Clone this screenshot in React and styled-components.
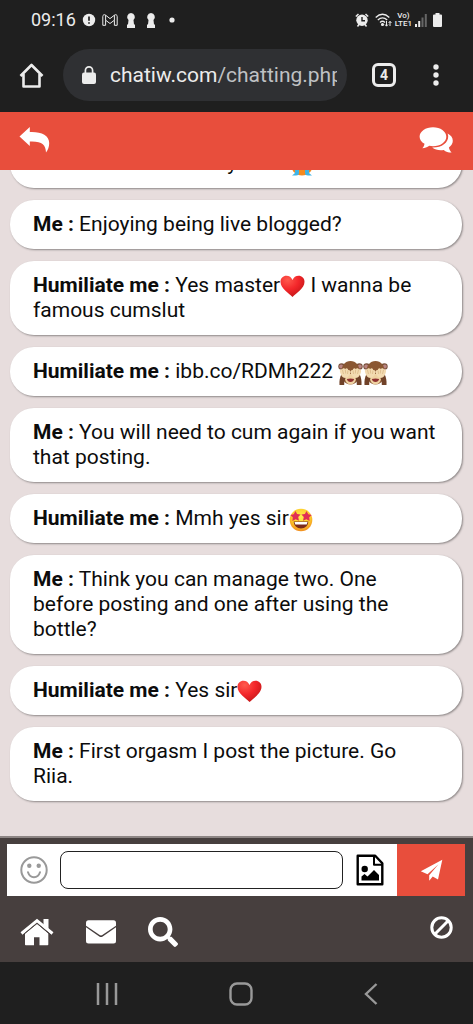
import React from "react";
import styled, { createGlobalStyle } from "styled-components";
import { FaSearch } from "react-icons/fa";

const GlobalStyle = createGlobalStyle`
  * { box-sizing: border-box; }
  body { margin: 0; background: #1f1f1f; font-family: Roboto, "Noto Sans", sans-serif; }
  button { border: 0; padding: 0; background: none; color: inherit; font: inherit; display: flex; align-items: center; justify-content: center; }
  svg { display: block; flex: none; }
`;

const Screen = styled.div`
  height: 100vh;
  display: flex;
  flex-direction: column;
`;

const StatusBar = styled.div`
  display: flex;
  align-items: center;
  justify-content: space-between;
  height: 40px;
  padding: 0 31px;
  color: #ececec;
`;

const StatusGroup = styled.div`
  display: flex;
  align-items: center;
  gap: ${(p) => p.$gap}px;
`;

const Clock = styled.time`
  font-size: 18px;
  line-height: 20px;
`;

const Lte = styled.span`
  display: flex;
  flex-direction: column;
  align-items: center;
  font-size: 8px;
  line-height: 8px;
  font-weight: 500;
`;

const BrowserBar = styled.div`
  display: flex;
  align-items: center;
  height: 72px;
  padding: 0 34px 2px 19px;
  color: #ececec;
`;

const AddressPill = styled.div`
  display: flex;
  align-items: center;
  flex: 1;
  min-width: 0;
  height: 52px;
  margin: 0 25px 0 19px;
  padding: 0 10px 0 19px;
  border-radius: 26px;
  background: #2f3033;
`;

const Address = styled.span`
  flex: 1;
  min-width: 0;
  margin-left: 14px;
  overflow: hidden;
  white-space: nowrap;
  font-size: 21px;
  line-height: 28px;
  color: #bfc1c4;
  b { font-weight: 400; color: #ececec; }
`;

const TabCount = styled.button`
  && { border: 3px solid #ececec; font-size: 14px; font-weight: 700; }
  width: 24px;
  height: 24px;
  border-radius: 6px;
  margin-right: 37px;
`;

const ChatHeader = styled.header`
  display: flex;
  align-items: center;
  justify-content: space-between;
  height: 58px;
  padding: 0 19px 2px;
  background: #e84e3c;
  color: #fff;
`;

const Messages = styled.main`
  flex: 1;
  min-height: 0;
  overflow: hidden;
  display: flex;
  flex-direction: column;
  justify-content: flex-end;
  gap: 12px;
  padding: 0 11px 35px 10px;
  background: #e7dddd;
`;

const Bubble = styled.p`
  flex: none;
  margin: 0;
  padding: 12px 23px;
  border-radius: 24px;
  background: #fff;
  box-shadow: 1px 1px 2px #8e8888;
  color: #0c0c0c;
  font-size: 21px;
  line-height: 25px;
  svg { display: inline-block; vertical-align: -5px; margin: -2px 0; }
`;

const Footer = styled.footer`
  padding: 6px 8px 0 7px;
  border-top: 2px solid #8d8584;
  background: #473f3e;
  color: #fff;
`;

const Composer = styled.form`
  display: flex;
  align-items: center;
  height: 52px;
  background: #fff;
`;

const SmileButton = styled.button`
  width: 53px;
  && { color: #999; }
`;

const MessageInput = styled.input`
  flex: 1;
  min-width: 0;
  height: 38px;
  padding: 0 10px;
  border: 1px solid #222;
  border-radius: 8px;
  background: #fff;
  font: 21px Roboto, sans-serif;
`;

const ImageButton = styled.button`
  width: 54px;
  && { color: #000; }
`;

const SendButton = styled.button`
  width: 68px;
  height: 52px;
  && { background: #e84e3c; }
`;

const Tools = styled.nav`
  display: flex;
  align-items: center;
  gap: 32px;
  height: 66px;
  padding: 5px 12px 0 13px;
`;

const BlockButton = styled.button`
  margin: 0 0 8px auto;
`;

const SystemNav = styled.nav`
  display: flex;
  align-items: center;
  justify-content: space-around;
  height: 62px;
  padding: 2px 40px 0;
  background: #1f1f1f;
  color: #999;
`;

const Heart = () => (
  <svg width="25" height="25" viewBox="0 0 25 25" aria-label="red heart">
    <defs>
      <radialGradient id="heart" cx=".3" cy=".2" r=".9">
        <stop offset="0" stopColor="#ff5a4d" /><stop offset=".5" stopColor="#f3262a" /><stop offset="1" stopColor="#bd1515" />
      </radialGradient>
    </defs>
    <path d="M12.500 23C9 19.500 .5 14.500.5 7.800.5 4 3.200 1.700 6.400 1.700c2.800 0 5 1.600 6.100 4.200 1.100-2.600 3.300-4.200 6.100-4.200 3.200 0 5.900 2.300 5.900 6.100 0 6.700-8.500 11.700-12 15.200z" fill="url(#heart)" />
  </svg>
);

const Monkey = () => (
  <svg width="25" height="25" viewBox="0 0 25 25" aria-label="see-no-evil monkey">
    <circle cx="3.600" cy="6.500" r="3.300" fill="#79503b" /><circle cx="21.400" cy="6.500" r="3.300" fill="#79503b" />
    <circle cx="3.200" cy="6.500" r="2" fill="#b98482" /><circle cx="21.800" cy="6.500" r="2" fill="#b98482" />
    <path d="M3.500 12C3.500 5 7 1 12.500 1s9 4 9 11c0 7-3 12.500-9 12.500S3.500 19 3.500 12z" fill="#8a5732" />
    <path d="M7 14h11c1 5-1 10.500-5.500 10.500S6 19 7 14z" fill="#efd2a2" />
    <path d="M8.800 19q3.700-1.200 7.400 0-.8 3-3.700 3t-3.700-3z" fill="#8e3030" />
    <path d="M1.500 25c-.3-4 .3-8 2-11l4.500 3.500c-1.500 2-1.800 4.500-1.800 7.500zM23.500 25c.3-4-.3-8-2-11L17 17.500c1.500 2 1.800 4.500 1.800 7.500z" fill="#704229" />
    <path d="M2 12c-.5-2 .5-3 2-2.500C4.500 8 6.500 7.600 7.200 9 8.500 7.600 10 8.500 10.200 10c1.600-.3 2.400.7 2.200 2.300-.3 3-2.700 5.700-5.200 5.700S2.700 15 2 12zM23 12c.5-2-.5-3-2-2.500C20.500 8 18.500 7.600 17.800 9c-1.300-1.400-2.800-.5-3 1-1.600-.3-2.400.7-2.200 2.300.3 3 2.700 5.700 5.200 5.700s4.500-3 5.200-6z" fill="#f3dbb2" />
    <path d="M4.500 10l1 4M7.300 9.500l.4 4M10 10.500l-.5 3.500M20.500 10l-1 4M17.700 9.500l-.4 4M15 10.500l.5 3.500" stroke="#d2ac79" strokeWidth=".6" fill="none" />
  </svg>
);

const StarEyes = () => (
  <svg width="24" height="24" viewBox="0 0 24 24" aria-label="star-struck face">
    <defs>
      <radialGradient id="face" cx=".5" cy=".35" r=".7">
        <stop offset="0" stopColor="#fff04d" /><stop offset=".6" stopColor="#fdc929" /><stop offset="1" stopColor="#ee7f1d" />
      </radialGradient>
    </defs>
    <circle cx="12" cy="12" r="11.300" fill="url(#face)" />
    <path d="M4.700 13.500h14.600c0 4-3.200 7-7.300 7s-7.300-3-7.300-7z" fill="#7b2a1b" />
    <path d="M5.500 14h13l-.8 2.500H6.300z" fill="#fff" />
    <path d="M6.500 3l1.600 3.100 3.500.3-2.400 2.700.8 3.600-3.400-1.500-3.200 1.800.4-3.700L1.200 7l3.500-.7z" fill="#e02f55" />
    <path d="M17.500 3l-1.600 3.100-3.500.3 2.400 2.700-.8 3.600 3.400-1.500 3.200 1.800-.4-3.700L22.800 7l-3.500-.7z" fill="#e02f55" />
  </svg>
);

const CryingFace = () => (
  <svg width="24" height="24" viewBox="0 0 24 24" aria-label="crying face">
    <circle cx="12" cy="11.500" r="11" fill="#f58a1f" />
    <path d="M5 10h4v10q0 2.500-3 2.500H2q1-1 3-2.500zM15 10h4v10q2 1.500 3 2.500h-4q-3 0-3-2.500z" fill="#3fb4e6" />
  </svg>
);

const Keyhole = () => (
  <svg width="14" height="15" viewBox="-2 0 14 15">
    <path d="M5 0a4 4 0 0 1 2.500 7L8 11.500h1V15H1v-3.500h1L2.500 7A4 4 0 0 1 5 0z" fill="currentColor" />
  </svg>
);

const messages = [
  { from: "Humiliate me", body: <>So shy there<CryingFace /></> },
  { from: "Me", body: "Enjoying being live blogged?" },
  { from: "Humiliate me", body: <>Yes master<Heart /> I wanna be famous cumslut</> },
  { from: "Humiliate me", body: <>ibb.co/RDMh222 <Monkey /><Monkey /></> },
  { from: "Me", body: "You will need to cum again if you want that posting." },
  { from: "Humiliate me", body: <>Mmh yes sir<StarEyes /></> },
  { from: "Me", body: "Think you can manage two. One before posting and one after using the bottle?" },
  { from: "Humiliate me", body: <>Yes sir<Heart /></> },
  { from: "Me", body: "First orgasm I post the picture. Go Riia." },
];

export default function App() {
  return (
    <Screen>
      <GlobalStyle />
      <StatusBar>
        <StatusGroup $gap={6}>
          <Clock>09:16</Clock>
          <svg width="14" height="14" viewBox="0 0 14 14">
            <circle cx="7" cy="7" r="6.200" fill="currentColor" />
            <path d="M7 3.500v4.300M7 9.200v1.500" stroke="#1f1f1f" strokeWidth="1.700" />
          </svg>
          <svg width="16" height="12" viewBox="0 0 16 12" fill="none" stroke="currentColor" strokeWidth="1" strokeLinejoin="round">
            <path d="M.8 11.300V2.500C.8.700 2.400.2 3.600 1.200L8 4.600l4.400-3.400c1.200-1 2.800-.5 2.800 1.300v8.800h-2.800V6.200L8 9.500 3.600 6.200v5.100zM3.600 1.200v5M12.400 1.200v5" />
          </svg>
          <Keyhole />
          <Keyhole />
          <svg width="16" height="6" viewBox="0 0 16 6"><circle cx="8" cy="3" r="2.600" fill="currentColor" /></svg>
        </StatusGroup>
        <StatusGroup $gap={3}>
          <svg width="17" height="14" viewBox="0 0 17 14">
            <circle cx="7" cy="7.300" r="5.700" fill="currentColor" />
            <path d="M.8 3.500L3.500 1M13.200 3.500L10.500 1M2.500 13.500l1.500-2M11.500 13.500l-1.500-2" stroke="currentColor" strokeWidth="1.500" />
            <path d="M7 4v3.700h3" stroke="#1f1f1f" strokeWidth="1.400" fill="none" />
          </svg>
          <svg width="17" height="14" viewBox="0 0 17 14" fill="none" stroke="currentColor" strokeWidth="1.300">
            <path d="M.7 4.500q6.800-6.500 13.600 0M2.800 7q4.700-4.300 9.400 0M5 9.400q2.500-2.200 5 0" />
            <circle cx="7.500" cy="11.500" r=".9" fill="currentColor" />
            <path d="M11.500 8v5M10 11.500l1.500 1.700 1.500-1.700M15 13V8.500M13.600 10L15 8.300l1.400 1.700" strokeWidth="1" />
          </svg>
          <Lte><span>Vo)</span><span>LTE1</span></Lte>
          <svg width="15" height="13" viewBox="0 0 15 13">
            <path d="M0 10h2v3H0zM3.200 7h2v6h-2z" fill="currentColor" />
            <path d="M6.500 3.500h2V13h-2zM9.800 0h2v13h-2z" fill="#666" />
          </svg>
          <svg width="9" height="14" viewBox="0 0 9 14"><path d="M2.500 0h4v1.500H8q1 0 1 1V13q0 1-1 1H1q-1 0-1-1V2.500q0-1 1-1h1.500z" fill="currentColor" /></svg>
        </StatusGroup>
      </StatusBar>

      <BrowserBar>
        <button aria-label="Home page">
          <svg width="25" height="25" viewBox="0 0 25 25" fill="none" stroke="currentColor" strokeWidth="2.600" strokeLinejoin="round">
            <path d="M1.500 13L12.500 2l11 11M4.500 11v12.500h16V11" />
          </svg>
        </button>
        <AddressPill>
          <svg width="14" height="18" viewBox="0 0 14 18">
            <rect x="0" y="6.500" width="14" height="11.500" rx="2" fill="currentColor" />
            <path d="M3.400 7V4.500a3.600 3.600 0 0 1 7.200 0V7" stroke="currentColor" strokeWidth="1.700" fill="none" />
          </svg>
          <Address><b>chatiw.com</b>/chatting.php</Address>
        </AddressPill>
        <TabCount>4</TabCount>
        <button aria-label="Menu">
          <svg width="6" height="22" viewBox="0 0 6 22" fill="currentColor">
            <circle cx="3" cy="3" r="2.700" /><circle cx="3" cy="11" r="2.700" /><circle cx="3" cy="19" r="2.700" />
          </svg>
        </button>
      </BrowserBar>

      <ChatHeader>
        <button aria-label="Back">
          <svg width="32" height="28" viewBox="0 0 32 28" fill="currentColor">
            <path d="M.5 10.500L10.800 1v5C22 5.500 30.200 9 30.200 17c0 3.700-1.200 7-3.200 9.500-.3-8-4-11.500-16.200-11V20z" />
          </svg>
        </button>
        <button aria-label="Chats">
          <svg width="36" height="28" viewBox="0 0 36 28" fill="currentColor">
            <path d="M15 1.200c7.400 0 13.300 4.200 13.300 9.500S22.400 20.200 15 20.200c-1.300 0-2.500-.1-3.700-.4-2.100 1.700-4.500 2.400-7 2.500 1-1.100 1.900-2.300 2.200-4.500-3-1.700-4.900-4.200-4.900-7.100C1.600 5.400 7.600 1.200 15 1.200z" />
            <path d="M29.600 7.600c3.300 1.600 5.200 4.200 5.200 7.200 0 2.700-1.500 5-3.900 6.700.4 2.200 1.400 3.700 2.700 5.100-2.900.1-5.700-.8-7.900-2.600-4.300.7-8.500-.1-11.500-2.400 9.500.3 16-4.700 16-11 0-1-.2-2-.6-3z" />
          </svg>
        </button>
      </ChatHeader>

      <Messages>
        {messages.map((m, i) => (
          <Bubble key={i}><b>{m.from} :</b> {m.body}</Bubble>
        ))}
      </Messages>

      <Footer>
        <Composer onSubmit={(e) => e.preventDefault()}>
          <SmileButton type="button" aria-label="Emoji">
            <svg width="28" height="28" viewBox="0 0 28 28" fill="none" stroke="currentColor" strokeWidth="2">
              <circle cx="14" cy="14" r="12.700" />
              <circle cx="9.300" cy="9.700" r="2.200" fill="currentColor" stroke="none" />
              <circle cx="18.700" cy="9.700" r="2.200" fill="currentColor" stroke="none" />
              <path d="M8 16.200q1.700 5 6 5t6-5" strokeLinecap="round" />
            </svg>
          </SmileButton>
          <MessageInput type="text" aria-label="Message" />
          <ImageButton type="button" aria-label="Attach image">
            <svg width="28" height="32" viewBox="0 0 28 32" fill="none" stroke="currentColor" strokeWidth="2.400" strokeLinejoin="round">
              <path d="M1.700 1.700h17.500l7.100 7.500v21.100H1.700z" />
              <path d="M18 2v8.700h8.300" strokeWidth="2" />
              <circle cx="8.700" cy="15" r="3.200" fill="currentColor" stroke="none" />
              <path d="M5.500 26.500v-4l3-2.500 3 2.500 6.500-6.500 5 5v5.500z" fill="currentColor" stroke="none" />
            </svg>
          </ImageButton>
          <SendButton type="submit" aria-label="Send">
            <svg width="23" height="23" viewBox="0 0 23 23" fill="currentColor">
              <path d="M22.300.8L.8 12.300l6.700 3L18.500 5.200 9.200 16.200v5.600l3.500-4.300 5.300 3z" />
            </svg>
          </SendButton>
        </Composer>
        <Tools>
          <button aria-label="Home">
            <svg width="34" height="28" viewBox="0 0 34 28" fill="currentColor">
              <path d="M17 5.600L5 15.500v11q0 .8.800.8H14v-8h5.500v8h8q.8 0 .8-.8v-11z" />
              <path d="M1.500 15.500L17 2.700l15.500 12.800" fill="none" stroke="currentColor" strokeWidth="3" />
              <path d="M3.200 16.800L17 5.500l13.800 11.300" fill="none" stroke="#473f3e" strokeWidth="1" />
              <path d="M23.500 1h5v10l-5-4z" />
            </svg>
          </button>
          <button aria-label="Mail">
            <svg width="30" height="24" viewBox="0 0 30 24" fill="currentColor">
              <path d="M2.500.3h25Q30 .3 30 2.800v3L16.300 15.100q-1.300.8-2.600 0L0 5.800v-3Q0 .3 2.500.3z" />
              <path d="M0 7.200l13.300 9.300q1.700 1 3.400 0L30 7.200V21q0 2.500-2.500 2.500h-25Q0 23.500 0 21z" />
            </svg>
          </button>
          <button aria-label="Search"><FaSearch size={30} /></button>
          <BlockButton aria-label="Block">
            <svg width="23" height="23" viewBox="0 0 23 23" fill="none" stroke="currentColor" strokeWidth="3">
              <circle cx="11.500" cy="11.500" r="9.700" /><path d="M4.800 18.200L18.200 4.800" />
            </svg>
          </BlockButton>
        </Tools>
      </Footer>

      <SystemNav>
        <button aria-label="Recent apps">
          <svg width="22" height="22" viewBox="0 0 22 22" stroke="currentColor" strokeWidth="2.500"><path d="M2 0v22M11 0v22M20 0v22" /></svg>
        </button>
        <button aria-label="Home screen">
          <svg width="24" height="24" viewBox="0 0 24 24" fill="none" stroke="currentColor" strokeWidth="2.400"><rect x="1.500" y="1.500" width="21" height="21" rx="6.500" /></svg>
        </button>
        <button aria-label="Go back">
          <svg width="14" height="22" viewBox="0 0 14 22" fill="none" stroke="currentColor" strokeWidth="2.400"><path d="M12.500 1L2 11l10.500 10" /></svg>
        </button>
      </SystemNav>
    </Screen>
  );
}
